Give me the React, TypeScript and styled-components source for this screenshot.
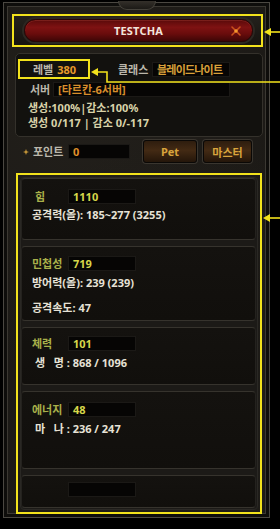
import React from "react";
import styled, { createGlobalStyle } from "styled-components";

const YELLOW = "#f2e21c";

const Global = createGlobalStyle`
  html, body { margin: 0; padding: 0; background: #000; }
  body {
    width: 280px; height: 529px; overflow: hidden;
    font-family: "Noto Sans", "Noto Sans CJK KR", sans-serif;
    font-size: 11px;
  }
  #root { position: relative; width: 280px; height: 529px; }
`;

const Window = styled.div`
  position: relative;
  box-sizing: border-box;
  margin: 2px 0 0 3px;
  width: 267px;
  height: 516px;
  border: 1px solid #4b4842;
  background:
    radial-gradient(circle at 30% 20%, rgba(60, 54, 44, 0.25), transparent 60%),
    radial-gradient(circle at 70% 80%, rgba(50, 46, 38, 0.25), transparent 60%),
    #1a1815;
  box-shadow: inset 0 0 0 3px #0e0d0b, inset 0 0 0 4px #3b3832;
  display: flex;
  flex-direction: column;
`;

const TopOrnament = styled.div`
  position: absolute;
  top: -2px;
  left: 50%;
  transform: translateX(-50%);
  width: 36px;
  height: 8px;
  background: linear-gradient(#34302a, #1c1a16);
  border: 1px solid #45423b;
  border-top: none;
  border-radius: 0 0 10px 10px;
`;

const Highlight = styled.div<{ $mt: number; $ml: number; $w: number; $h: number }>`
  box-sizing: border-box;
  margin: ${(p) => p.$mt}px 0 0 ${(p) => p.$ml}px;
  width: ${(p) => p.$w}px;
  height: ${(p) => p.$h}px;
  border: 2px solid ${YELLOW};
  flex-shrink: 0;
`;

const TitleArea = styled.div`
  box-sizing: border-box;
  height: 100%;
  padding: 3px 0 0 10px;
  background: linear-gradient(#24211c, #161410);
`;

const TitleBar = styled.div`
  box-sizing: border-box;
  width: 229px;
  height: 23px;
  border-radius: 12px;
  border: 1px solid #2a0606;
  background: linear-gradient(#5a0a0a 0%, #7e1212 35%, #6a0c0c 65%, #3e0606 100%);
  box-shadow: 0 0 0 2px #2c2822, inset 0 1px 0 rgba(255, 120, 100, 0.18);
  display: grid;
  grid-template-columns: 1fr auto 1fr;
  align-items: center;
`;

const TitleText = styled.span`
  grid-column: 2;
  font-family: "Noto Sans", sans-serif;
  font-weight: 700;
  font-size: 11px;
  color: #f2e4dc;
  letter-spacing: 0.2px;
`;

const CloseIcon = styled.svg`
  grid-column: 3;
  justify-self: end;
  margin-right: 10px;
  display: block;
`;

const InfoPanel = styled.div`
  box-sizing: border-box;
  margin: 6px 0 0 11px;
  width: 248px;
  height: 84px;
  border: 1px solid #34312b;
  border-radius: 5px;
  background: #12110e;
  display: flex;
  flex-direction: column;
`;

const InfoRow = styled.div<{ $mt: number; $ml: number }>`
  display: flex;
  align-items: center;
  margin: ${(p) => p.$mt}px 0 0 ${(p) => p.$ml}px;
`;

const LevelBox = styled.div`
  box-sizing: border-box;
  width: 72px;
  height: 20px;
  border: 2px solid ${YELLOW};
  padding-left: 13px;
  display: flex;
  align-items: center;
`;

const Label = styled.span<{ $w?: number; $color?: string; $indent?: number; $ml?: number }>`
  display: inline-block;
  box-sizing: border-box;
  width: ${(p) => (p.$w ? `${p.$w}px` : "auto")};
  margin-left: ${(p) => p.$ml ?? 0}px;
  padding-left: ${(p) => p.$indent ?? 0}px;
  color: ${(p) => p.$color ?? "#bbb7ab"};
  font-weight: 700;
  white-space: nowrap;
  line-height: 15px;
`;

const Value = styled.span<{ $color: string; $ml?: number }>`
  color: ${(p) => p.$color};
  font-weight: 700;
  margin-left: ${(p) => p.$ml ?? 0}px;
  line-height: 15px;
  white-space: nowrap;
`;

const Field = styled.div<{ $w: number; $color?: string; $tight?: boolean }>`
  box-sizing: border-box;
  width: ${(p) => p.$w}px;
  height: 15px;
  background: #060504;
  border: 1px solid #1b1916;
  padding-left: 4px;
  color: ${(p) => p.$color ?? "#d6d64a"};
  font-weight: 700;
  line-height: 13px;
  letter-spacing: ${(p) => (p.$tight ? "-0.8px" : "0")};
  white-space: nowrap;
  overflow: hidden;
`;

const InfoText = styled.div<{ $mt: number }>`
  margin: ${(p) => p.$mt}px 0 0 12px;
  color: #d9d3a9;
  font-weight: 700;
  line-height: 15px;
  white-space: nowrap;
`;

const PointRow = styled.div`
  display: flex;
  align-items: center;
  margin: 3px 0 0 11px;
  height: 23px;
  padding-left: 8px;
`;

const Bullet = styled.svg`
  display: block;
  margin-right: 4px;
`;

const GameButton = styled.div<{ $w: number; $ml: number }>`
  box-sizing: border-box;
  width: ${(p) => p.$w}px;
  height: 23px;
  margin-left: ${(p) => p.$ml}px;
  border: 1px solid #0a0806;
  border-radius: 3px;
  background: linear-gradient(#2e1d0e, #432a14 45%, #24160a);
  box-shadow: 0 0 0 1px #3a362f;
  display: flex;
  align-items: center;
  justify-content: center;
  color: #d9a43c;
  font-weight: 700;
  font-size: 11px;
`;

const StatsInner = styled.div`
  box-sizing: border-box;
  margin: 2px;
  height: calc(100% - 4px);
  border: 1px solid #2a2824;
  border-radius: 4px;
  background: #1c1a17;
  display: flex;
  flex-direction: column;
  gap: 6px;
`;

const Section = styled.div<{ $h: number; $pt: number }>`
  box-sizing: border-box;
  width: 235px;
  height: ${(p) => p.$h}px;
  border: 1px solid #24221e;
  border-top-color: #36332d;
  border-bottom-color: #36332d;
  border-radius: 4px;
  background: linear-gradient(#14120f, #110f0c);
  padding: ${(p) => p.$pt}px 0 0 10px;
  flex-shrink: 0;
`;

const StatHead = styled.div`
  display: flex;
  align-items: center;
  height: 15px;
`;

const StatLine = styled.div<{ $mt: number; $indent?: number }>`
  margin-top: ${(p) => p.$mt}px;
  padding-left: ${(p) => p.$indent ?? 0}px;
  color: #e6e2d6;
  font-weight: 700;
  line-height: 15px;
  white-space: pre;
`;

const Overlay = styled.svg`
  position: absolute;
  top: 0;
  left: 0;
  pointer-events: none;
`;

const STAT_LABEL = "#a9b04a";

export default function App() {
  return (
    <>
      <Global />
      <Window>
        <TopOrnament />
        <Highlight $mt={11} $ml={8} $w={251} $h={33}>
          <TitleArea>
            <TitleBar>
              <TitleText>TESTCHA</TitleText>
              <CloseIcon width="12" height="12" viewBox="0 0 12 12">
                <path d="M2 2 L10 10 M10 2 L2 10" stroke="#c8501c" strokeWidth="1.6" strokeLinecap="round" />
                <circle cx="6" cy="6" r="1.8" fill="#f49a30" />
              </CloseIcon>
            </TitleBar>
          </TitleArea>
        </Highlight>

        <InfoPanel>
          <InfoRow $mt={5} $ml={2}>
            <LevelBox>
              <Label>레벨</Label>
              <Value $color="#e8992a" $ml={4}>380</Value>
            </LevelBox>
            <Label $w={34} $ml={28}>클래스</Label>
            <Field $w={78} $color="#d8a03a" $tight>블레이드나이트</Field>
          </InfoRow>
          <InfoRow $mt={3} $ml={14}>
            <Label $w={23}>서버</Label>
            <Field $w={177} $color="#d88e2c">[타르칸-6서버]</Field>
          </InfoRow>
          <InfoText $mt={3}>생성:100%|감소:100%</InfoText>
          <InfoText $mt={0}>생성 0/117 | 감소 0/-117</InfoText>
        </InfoPanel>

        <PointRow>
          <Bullet width="6" height="6" viewBox="0 0 6 6">
            <path d="M3 0 L3.8 2.2 L6 3 L3.8 3.8 L3 6 L2.2 3.8 L0 3 L2.2 2.2 Z" fill="#c99a3a" />
          </Bullet>
          <Label $w={35}>포인트</Label>
          <Field $w={62} $color="#e0902a">0</Field>
          <GameButton $w={54} $ml={13}>Pet</GameButton>
          <GameButton $w={49} $ml={6}>마스터</GameButton>
        </PointRow>

        <Highlight $mt={10} $ml={12} $w={246} $h={341}>
          <StatsInner>
            <Section $h={62} $pt={10}>
              <StatHead>
                <Label $w={36} $indent={3} $color={STAT_LABEL}>힘</Label>
                <Field $w={68}>1110</Field>
              </StatHead>
              <StatLine $mt={3}>공격력(올): 185~277 (3255)</StatLine>
            </Section>
            <Section $h={75} $pt={9}>
              <StatHead>
                <Label $w={36} $color={STAT_LABEL}>민첩성</Label>
                <Field $w={68}>719</Field>
              </StatHead>
              <StatLine $mt={4}>방어력(올): 239 (239)</StatLine>
              <StatLine $mt={10}>공격속도: 47</StatLine>
            </Section>
            <Section $h={58} $pt={8}>
              <StatHead>
                <Label $w={36} $color={STAT_LABEL}>체력</Label>
                <Field $w={68}>101</Field>
              </StatHead>
              <StatLine $mt={4} $indent={3}>{"생   명 : 868 / 1096"}</StatLine>
            </Section>
            <Section $h={78} $pt={10}>
              <StatHead>
                <Label $w={36} $color={STAT_LABEL}>에너지</Label>
                <Field $w={68}>48</Field>
              </StatHead>
              <StatLine $mt={4} $indent={3}>{"마   나 : 236 / 247"}</StatLine>
            </Section>
            <Section $h={33} $pt={6}>
              <StatHead>
                <Label $w={36} $color={STAT_LABEL}></Label>
                <Field $w={68}></Field>
              </StatHead>
            </Section>
          </StatsInner>
        </Highlight>
      </Window>

      <Overlay width="280" height="529" viewBox="0 0 280 529">
        <g stroke={YELLOW} strokeWidth="1.6" fill="none">
          <path d="M280 30 H269" />
          <path d="M280 80 H107 V70 H96" />
          <path d="M280 216 H268" />
        </g>
        <g fill={YELLOW}>
          <path d="M264 30 L271 26 L271 34 Z" />
          <path d="M91 70 L98 66 L98 74 Z" />
          <path d="M263 216 L270 212 L270 220 Z" />
        </g>
      </Overlay>
    </>
  );
}
